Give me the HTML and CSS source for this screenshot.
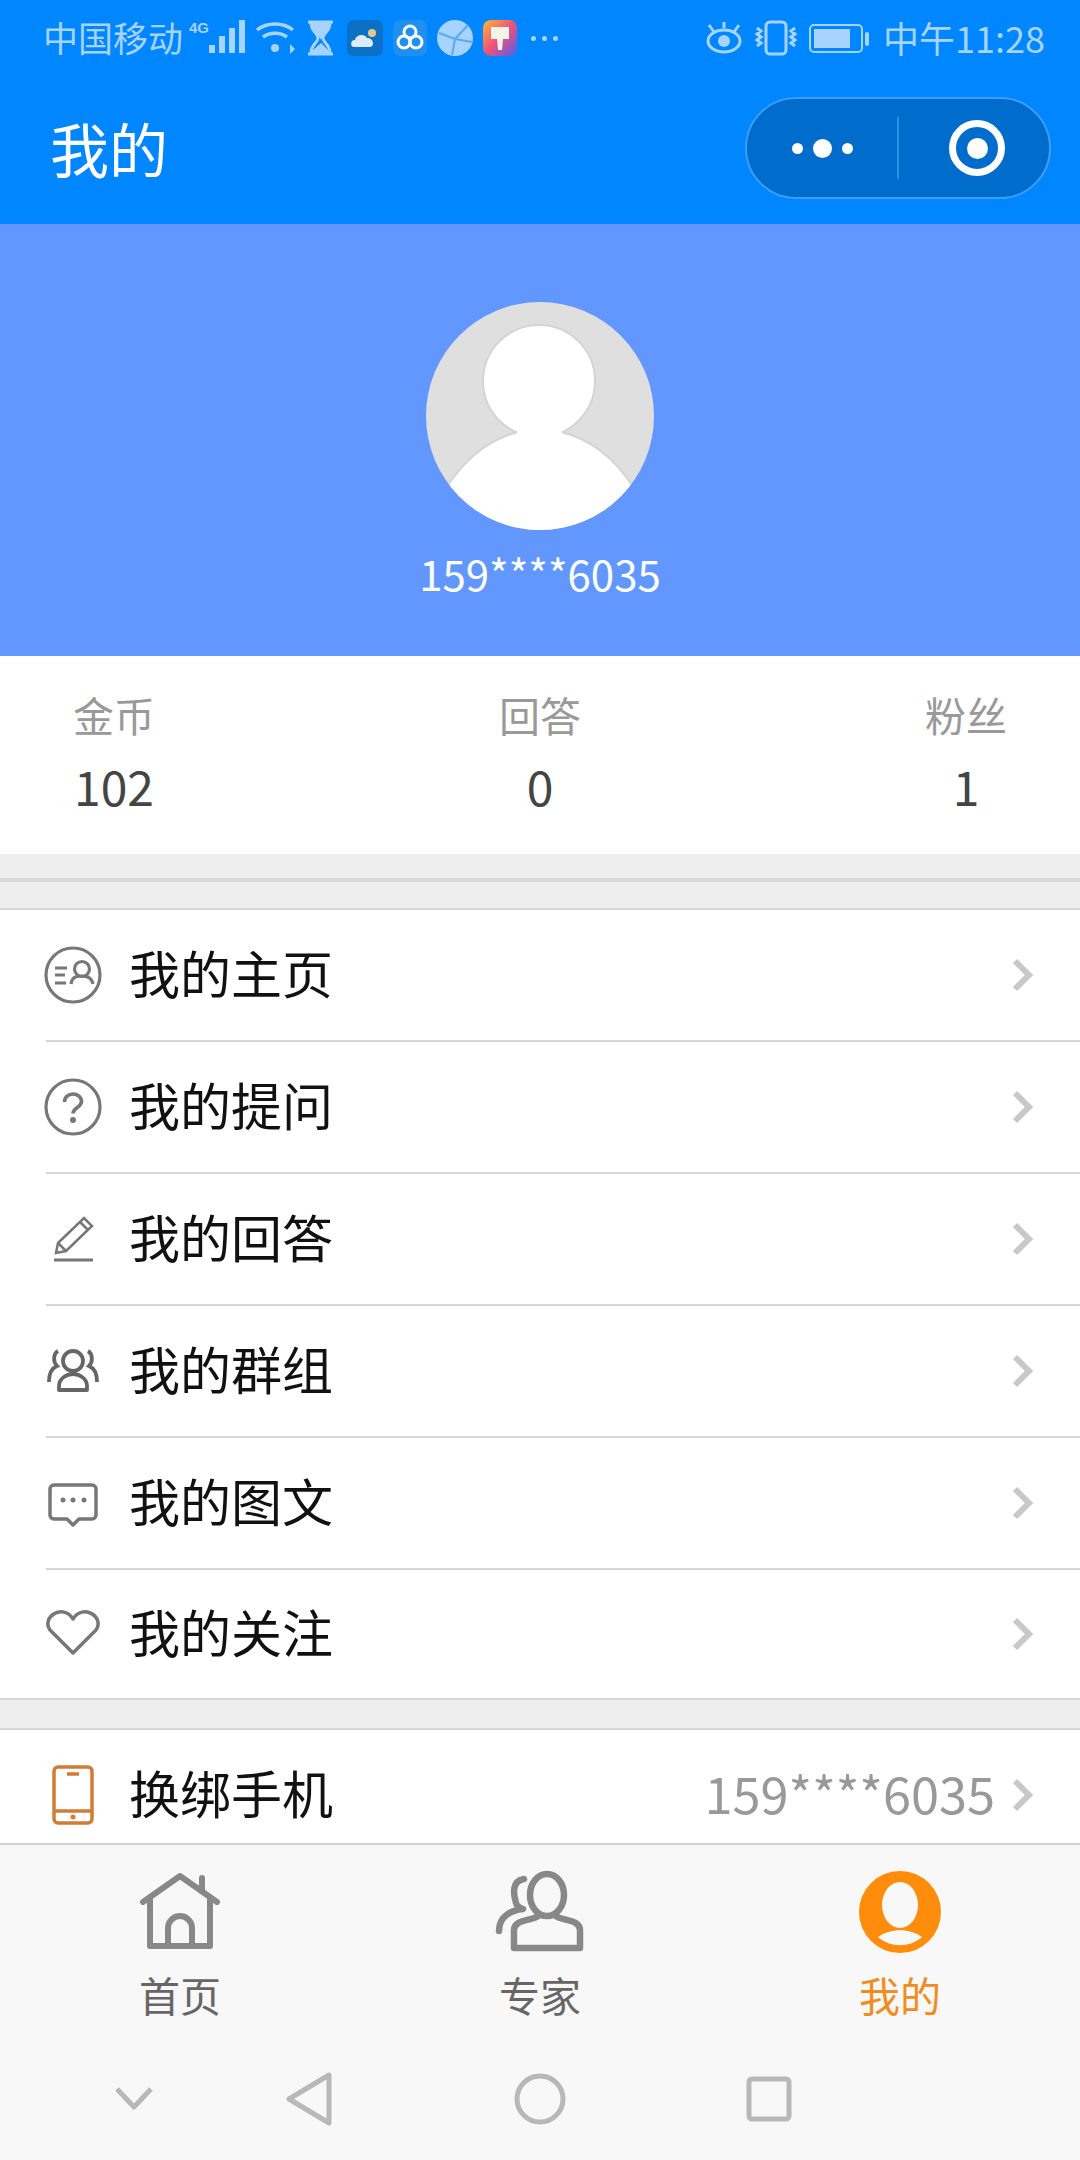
FILE: index.html
```html
<!DOCTYPE html>
<html>
<head>
<meta charset="utf-8"/>
<title>我的</title>
<link rel="stylesheet" href="styles.css">
</head>
<body>
<div class="page">

<header class="top">
  <div class="status">
    <div class="status-left">
      <span class="carrier">中国移动</span>
      <svg class="st-signal" width="58" height="38" viewBox="0 0 58 38">
        <text x="0" y="14" class="st-4g">4G</text>
        <g fill="#a6d3ff">
          <rect x="20" y="26" width="6" height="8"/><rect x="30" y="17" width="6" height="17"/>
          <rect x="40" y="9" width="6" height="25"/><rect x="50" y="1" width="6" height="33"/>
        </g>
      </svg>
      <svg class="st-wifi" width="42" height="38" viewBox="0 0 42 38" fill="none" stroke="#a6d3ff" stroke-width="3.5">
        <path d="M2 11c10-8 26-8 36 0"/><path d="M8 18c7-5 17-5 24 0"/><circle cx="20" cy="29" r="4" fill="#a6d3ff" stroke="none"/>
        <path d="M35 25l5 5-5 5z" fill="#a6d3ff" stroke="none"/>
      </svg>
      <svg class="st-glass" width="27" height="36" viewBox="0 0 27 36" fill="none" stroke="#a6d3ff" stroke-width="3">
        <path d="M1 2h25M1 34h25"/><path d="M4 3c0 9 7 10 7 15s-7 6-7 15h19c0-9-7-10-7-15s7-6 7-15z"/>
        <path d="M5 4h17l-8 13z" fill="#a6d3ff"/><path d="M6 32l8-7 7 7z" fill="#a6d3ff"/>
      </svg>
      <svg class="st-app" width="36" height="36" viewBox="0 0 36 36">
        <rect width="36" height="36" rx="7" fill="#0c70c4"/>
        <circle cx="25" cy="13" r="4" fill="#e3c98b"/>
        <path d="M7 27c-4 0-4-7 1-7 1-5 9-7 12-2 6-1 9 9 2 9z" fill="#dbecf8"/>
      </svg>
      <svg class="st-app" width="34" height="36" viewBox="0 0 34 36" fill="none">
        <rect width="34" height="36" rx="7" fill="#1f8ff0"/>
        <g stroke="#fff" stroke-width="3"><circle cx="17" cy="12" r="6"/><circle cx="11" cy="22" r="6"/><circle cx="23" cy="22" r="6"/></g>
      </svg>
      <svg class="st-app" width="36" height="36" viewBox="0 0 36 36" fill="none">
        <circle cx="18" cy="18" r="18" fill="#a6d3ff"/>
        <path d="M2 13l16 6 13-14M18 19l-3 16M18 19l17 3" stroke="#5aa9f2" stroke-width="2"/>
      </svg>
      <svg class="st-app" width="34" height="36" viewBox="0 0 34 36">
        <defs><linearGradient id="paint" x1="0" y1="0" x2="1" y2="1">
          <stop offset="0" stop-color="#ffb92e"/><stop offset=".5" stop-color="#f0507a"/><stop offset="1" stop-color="#4a62f0"/>
        </linearGradient></defs>
        <rect width="34" height="36" rx="8" fill="url(#paint)"/>
        <path d="M8 7h18v12h-6l-1 11h-4l-1-11H8z" fill="#f6f3ea"/>
      </svg>
      <span class="st-more"><i></i><i></i><i></i></span>
    </div>
    <div class="status-right">
      <svg width="38" height="36" viewBox="0 0 38 36" fill="none" stroke="#a6d3ff" stroke-width="3">
        <ellipse cx="19" cy="21" rx="16" ry="11"/><circle cx="19" cy="21" r="6" fill="#a6d3ff" stroke="none"/>
        <path d="M4 5l5 7M19 2v6M34 5l-5 7"/>
      </svg>
      <svg width="44" height="36" viewBox="0 0 44 36" fill="none" stroke="#a6d3ff" stroke-width="3">
        <rect x="12" y="2" width="20" height="32" rx="4"/>
        <path d="M3 8l4 3-4 3 4 3-4 3 4 3-4 3M41 8l-4 3 4 3-4 3 4 3-4 3 4 3"/>
      </svg>
      <svg width="61" height="32" viewBox="0 0 61 32" fill="none">
        <rect x="1" y="3" width="52" height="27" rx="4" stroke="#a6d3ff" stroke-width="2"/>
        <rect x="5" y="7" width="36" height="19" fill="#a6d3ff"/>
        <rect x="56" y="10" width="4" height="14" rx="2" fill="#a6d3ff"/>
      </svg>
      <span class="clock">中午11:28</span>
    </div>
  </div>
  <div class="navbar">
    <h1 class="nav-title">我的</h1>
    <div class="capsule">
      <div class="cap-more"><i></i><b></b><i></i></div>
      <div class="cap-line"></div>
      <div class="cap-target"><span></span></div>
    </div>
  </div>
</header>

<section class="profile">
  <svg class="avatar" width="228" height="228" viewBox="0 0 228 228">
    <defs><clipPath id="disc"><circle cx="114" cy="114" r="114"/></clipPath></defs>
    <circle cx="114" cy="114" r="114" fill="#dfdfdf"/>
    <g clip-path="url(#disc)">
      <circle cx="113" cy="79" r="56" fill="#fff" stroke="#d4d4d4" stroke-width="2"/>
      <path d="M20 186C42 152 68 136 92 130L135 130C160 136 186 152 208 186L228 240H0z" fill="#fff" stroke="#d4d4d4" stroke-width="2"/>
      <rect x="91" y="120" width="45" height="14" fill="#fff"/>
    </g>
  </svg>
  <div class="uname">159****6035</div>
</section>

<section class="stats">
  <div class="stat"><span class="stat-label">金币</span><span class="stat-num">102</span></div>
  <div class="stat"><span class="stat-label">回答</span><span class="stat-num">0</span></div>
  <div class="stat"><span class="stat-label">粉丝</span><span class="stat-num">1</span></div>
</section>

<div class="gap gap-double"><div class="gap-rule"></div></div>

<main class="list">
  <div class="row">
    <svg class="row-icon" width="60" height="60" viewBox="0 0 60 60" fill="none" stroke="#777" stroke-width="3.2">
      <circle cx="30" cy="30" r="27"/>
      <path d="M12 23h12M12 30h10M12 38h11"/>
      <circle cx="39" cy="24" r="7.5"/><path d="M28 39c1-7 5-8 11-8s10 2 11 8"/>
    </svg>
    <span class="row-text">我的主页</span>
    <svg class="chev" width="24" height="36" viewBox="0 0 24 36" fill="none"><path d="M4 4l14 14L4 32"/></svg>
  </div>
  <div class="row">
    <svg class="row-icon" width="60" height="60" viewBox="0 0 60 60" fill="none" stroke="#777" stroke-width="3.2">
      <circle cx="30" cy="30" r="27"/>
      <path d="M21.5 25c0-5 4-8 8.5-8s8.5 3 8.5 7.5c0 6-8.5 6-8.5 12" stroke-width="3.6"/><circle cx="30" cy="43" r="3" fill="#777" stroke="none"/>
    </svg>
    <span class="row-text">我的提问</span>
    <svg class="chev" width="24" height="36" viewBox="0 0 24 36" fill="none"><path d="M4 4l14 14L4 32"/></svg>
  </div>
  <div class="row">
    <svg class="row-icon" width="60" height="60" viewBox="0 0 60 60" fill="none" stroke="#777" stroke-width="2.5">
      <path d="M13 44l2-10L41 9l8 8-26 25z"/><path d="M15 34l8 8M37 13l8 8"/>
      <path d="M11 51h39" stroke-width="3"/>
    </svg>
    <span class="row-text">我的回答</span>
    <svg class="chev" width="24" height="36" viewBox="0 0 24 36" fill="none"><path d="M4 4l14 14L4 32"/></svg>
  </div>
  <div class="row">
    <svg class="row-icon" width="60" height="60" viewBox="0 0 60 60" fill="none" stroke="#666" stroke-width="3.8">
      <circle cx="30" cy="20" r="10"/>
      <path d="M16 49v-4c0-7 7-12 14-12s14 5 14 12v4z" stroke-linejoin="round"/>
      <path d="M15 10c-5 3-5 11-1 15-5 2-8 8-8 16M45 10c5 3 5 11 1 15 5 2 8 8 8 16"/>
    </svg>
    <span class="row-text">我的群组</span>
    <svg class="chev" width="24" height="36" viewBox="0 0 24 36" fill="none"><path d="M4 4l14 14L4 32"/></svg>
  </div>
  <div class="row">
    <svg class="row-icon" width="60" height="60" viewBox="0 0 60 60" fill="none" stroke="#777" stroke-width="3.5">
      <path d="M24 46H11a4 4 0 0 1-4-4V16a4 4 0 0 1 4-4h38a4 4 0 0 1 4 4v26a4 4 0 0 1-4 4H36l-6 6z" stroke-linejoin="round"/>
      <g fill="#777" stroke="none"><circle cx="20" cy="27" r="2.5"/><circle cx="30" cy="27" r="2.5"/><circle cx="41" cy="27" r="2.5"/></g>
    </svg>
    <span class="row-text">我的图文</span>
    <svg class="chev" width="24" height="36" viewBox="0 0 24 36" fill="none"><path d="M4 4l14 14L4 32"/></svg>
  </div>
  <div class="row row-last">
    <svg class="row-icon" width="60" height="60" viewBox="0 0 60 60" fill="none" stroke="#777" stroke-width="3.5">
      <path d="M30 49L7 26C-2 13 20-1 30 15 40-1 62 13 53 26z" stroke-linejoin="round"/>
    </svg>
    <span class="row-text">我的关注</span>
    <svg class="chev" width="24" height="36" viewBox="0 0 24 36" fill="none"><path d="M4 4l14 14L4 32"/></svg>
  </div>
  <div class="gap gap-single"></div>
  <div class="row row-last row-phone">
    <svg class="row-icon" width="60" height="60" viewBox="0 0 60 60" fill="none" stroke="#d07c35" stroke-width="3.5">
      <rect x="11" y="2" width="38" height="56" rx="4"/>
      <path d="M11 46h38M24 9h12"/><circle cx="30" cy="52" r="2.5" fill="#d07c35" stroke="none"/>
    </svg>
    <span class="row-text">换绑手机</span>
    <span class="row-value">159****6035</span>
    <svg class="chev" width="24" height="36" viewBox="0 0 24 36" fill="none"><path d="M4 4l14 14L4 32"/></svg>
  </div>
</main>

<footer class="bottom">
  <nav class="tabs">
    <div class="tab">
      <svg width="84" height="84" viewBox="0 0 84 84" fill="none" stroke="#888" stroke-width="6" stroke-linecap="round" stroke-linejoin="round">
        <path d="M5 32L42 6l37 26"/><path d="M64 8v13"/>
        <path d="M12 28v48h60V28"/><path d="M30 76V58a12 12 0 0 1 24 0v18"/>
      </svg>
      <span class="tab-label">首页</span>
    </div>
    <div class="tab">
      <svg width="92" height="84" viewBox="0 0 92 84" fill="none" stroke="#888" stroke-width="6.5" stroke-linecap="round" stroke-linejoin="round">
        <ellipse cx="53" cy="25" rx="17" ry="21"/>
        <path d="M44 46c-6 5-24 3-24 14v18h66V60c0-11-18-9-24-14" />
        <path d="M30 9c-12 2-11 14-8 24 1 4 4 5 7 6-10 1-24 6-24 22"/>
      </svg>
      <span class="tab-label">专家</span>
    </div>
    <div class="tab tab-on">
      <svg width="84" height="84" viewBox="0 0 84 84">
        <circle cx="42" cy="42" r="41" fill="#ff8c0a"/>
        <ellipse cx="42" cy="35" rx="18" ry="23" fill="#f8f8f8"/>
        <path d="M20 67c12-9 32-9 44 0-12 11-32 11-44 0z" fill="#f8f8f8"/>
      </svg>
      <span class="tab-label">我的</span>
    </div>
  </nav>
  <div class="sysnav">
    <svg width="44" height="30" viewBox="0 0 44 30" fill="none"><path d="M5 5l17 18L39 5"/></svg>
    <svg width="48" height="56" viewBox="0 0 48 56" fill="none"><path d="M44 4L4 28l40 24z"/></svg>
    <svg width="52" height="52" viewBox="0 0 52 52" fill="none"><circle cx="26" cy="26" r="23"/></svg>
    <svg width="46" height="46" viewBox="0 0 46 46" fill="none"><rect x="3" y="3" width="40" height="40" rx="3"/></svg>
  </div>
</footer>

</div>
</body>
</html>
```

FILE: styles.css
```css
* {
  box-sizing: border-box;
}

body {
  margin: 0;
  background-color: #fff;
  font-family: "Noto Sans CJK SC", "Noto Sans", sans-serif;
}

.page {
  width: 1080px;
  height: 2160px;
  overflow: hidden;
  display: flex;
  flex-direction: column;
}

/* status bar + title bar */
.top {
  background-color: #0087ff;
  height: 224px;
  flex: none;
}

.status {
  height: 76px;
  padding: 0 35px 0 43px;
  display: flex;
  align-items: center;
  justify-content: space-between;
  color: #a6d3ff;
}

.status-left, .status-right {
  display: flex;
  align-items: center;
}

.carrier {
  font-size: 35px;
  line-height: 40px;
  margin-bottom: 2px;
}

.st-signal {
  margin-left: 6px;
}

.st-4g {
  font-family: "Liberation Sans", sans-serif;
  font-size: 15px;
  font-weight: bold;
  fill: #a6d3ff;
}

.st-wifi {
  margin-left: 8px;
}

.st-glass {
  margin-left: 10px;
}

.st-app {
  margin-left: 10px;
}

.st-glass + .st-app {
  margin-left: 13px;
}

.st-more {
  display: flex;
  gap: 6px;
  margin-left: 14px;
}

.st-more i {
  width: 5px;
  height: 5px;
  border-radius: 50%;
  background-color: #a6d3ff;
}

.status-right {
  gap: 11px;
}

.clock {
  font-size: 36px;
  line-height: 40px;
  margin-left: 2px;
  margin-bottom: 2px;
}

.navbar {
  height: 148px;
  padding: 0 29px 4px 50px;
  display: flex;
  align-items: center;
  justify-content: space-between;
}

.nav-title {
  margin: 0;
  font-size: 59px;
  font-weight: normal;
  line-height: 70px;
  color: #fff;
}

.capsule {
  width: 306px;
  height: 102px;
  border: 2px solid #3d9eff;
  border-radius: 51px;
  background-color: #006ccb;
  display: flex;
  align-items: center;
}

.cap-more {
  width: 150px;
  display: flex;
  align-items: center;
  justify-content: center;
  gap: 10px;
}

.cap-more i {
  width: 11px;
  height: 11px;
  border-radius: 50%;
  background-color: #fff;
}

.cap-more b {
  width: 19px;
  height: 19px;
  border-radius: 50%;
  background-color: #fff;
}

.cap-line {
  width: 2px;
  height: 62px;
  background-color: #2e8fe6;
}

.cap-target {
  flex: 1;
  padding-left: 6px;
  display: flex;
  justify-content: center;
}

.cap-target span {
  width: 56px;
  height: 56px;
  border: 7px solid #fff;
  border-radius: 50%;
  display: flex;
  align-items: center;
  justify-content: center;
}

.cap-target span::after {
  content: "";
  width: 21px;
  height: 21px;
  border-radius: 50%;
  background-color: #fff;
}

/* blue profile block */
.profile {
  height: 432px;
  flex: none;
  background-color: #6197ff;
  padding-top: 78px;
  display: flex;
  flex-direction: column;
  align-items: center;
}

.avatar {
  display: block;
}

.uname {
  margin-top: 13px;
  font-size: 42px;
  line-height: 60px;
  color: #fff;
}

.stats {
  height: 198px;
  flex: none;
  padding: 33px 73px 0;
  display: flex;
  justify-content: space-between;
}

.stat {
  display: flex;
  flex-direction: column;
  align-items: center;
}

.stat-label {
  font-size: 41px;
  line-height: 50px;
  color: #999;
}

.stat-num {
  margin-top: 16px;
  font-size: 48px;
  line-height: 60px;
  color: #444;
}

.gap {
  flex: none;
  background-color: #eee;
  border-bottom: 2px solid #d6d6d6;
}

.gap-double {
  height: 56px;
  padding-top: 24px;
}

.gap-rule {
  height: 4px;
  background-color: #d6d6d6;
}

.gap-single {
  height: 32px;
  border-top: 2px solid #d6d6d6;
}

/* menu */
.list {
  flex: 1;
  min-height: 0;
  overflow: hidden;
}

.row {
  height: 132px;
  margin-left: 46px;
  padding-right: 45px;
  display: flex;
  align-items: center;
  border-bottom: 2px solid #d6d6d6;
}

.row-last {
  height: 128px;
  border-bottom: none;
}

.row-phone {
  height: 130px;
}

.row-icon {
  flex: none;
  margin-left: -3px;
  margin-right: 28px;
}

.row-text {
  flex: 1;
  margin-bottom: 6px;
  margin-left: -2px;
  font-size: 51px;
  line-height: 60px;
  color: #111;
}

.row-value {
  margin-right: 16px;
  margin-bottom: 6px;
  font-size: 50.5px;
  line-height: 60px;
  color: #999;
}

.chev {
  flex: none;
}

.chev path {
  stroke: #c8c8c8;
  stroke-width: 6;
}

/* bottom tabs + system keys */
.bottom {
  flex: none;
  height: 317px;
  background-color: #f8f8f8;
  border-top: 2px solid #d0d0d0;
}

.tabs {
  height: 190px;
  padding-top: 25px;
  display: grid;
  grid-template-columns: 360px 360px 360px;
}

.tab {
  display: flex;
  flex-direction: column;
  align-items: center;
}

.tab svg {
  display: block;
}

.tab-label {
  margin-top: 15px;
  font-size: 41px;
  line-height: 50px;
  color: #666;
}

.tab:first-child {
  padding-right: 0;
}

.tab-on .tab-label {
  color: #f08d1d;
}

.sysnav {
  padding: 36px 0 0 46px;
  display: grid;
  grid-template-columns: 176px 174px 288px 170px;
  justify-items: center;
  align-items: center;
}

.sysnav svg path, .sysnav svg circle, .sysnav svg rect {
  stroke: #b8b8b8;
  stroke-width: 5;
  stroke-linejoin: round;
}
```
